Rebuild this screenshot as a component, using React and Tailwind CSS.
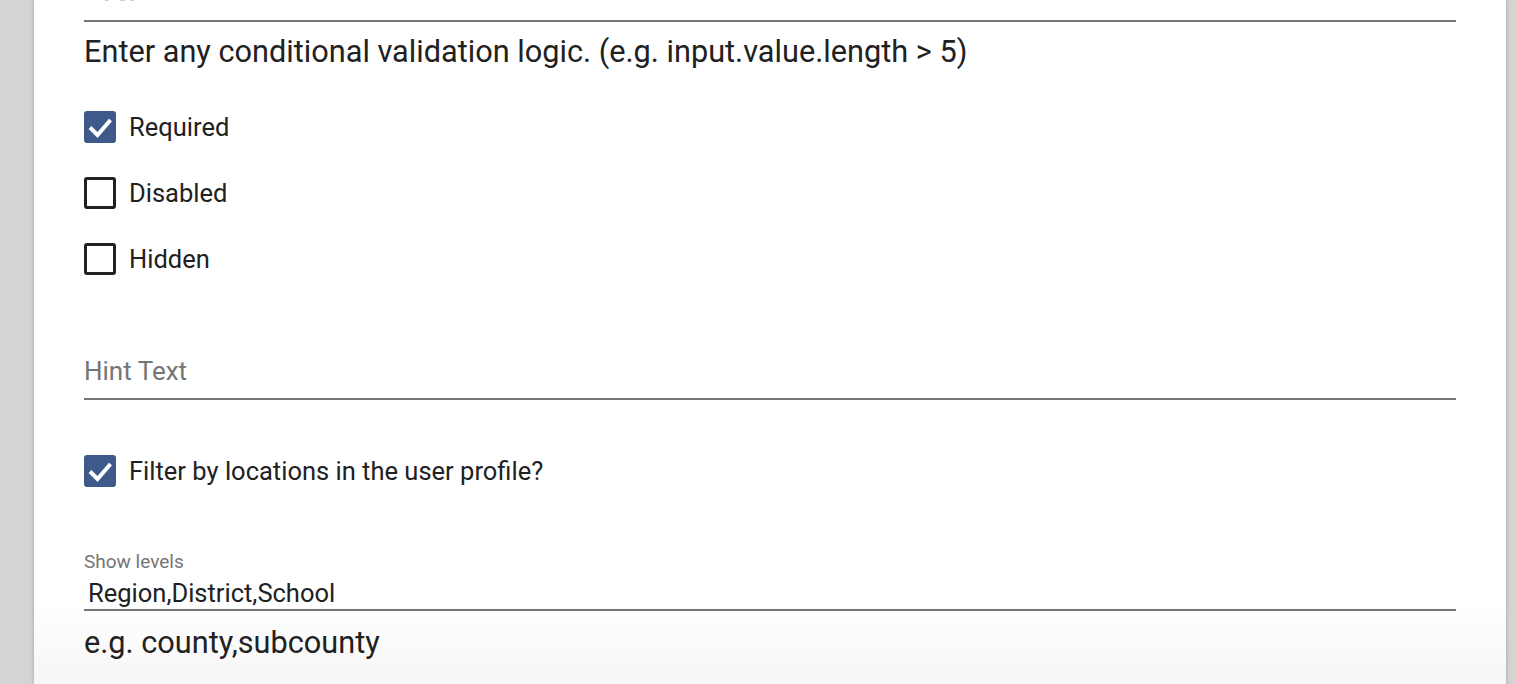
import React from "react";

function Box({ checked }) {
  if (checked) {
    return (
      <div className="w-8 h-8 rounded-[3px] bg-[#3d5a8a] shrink-0">
        <svg width="32" height="32" viewBox="0 0 32 32">
          <path d="M6 16.5 L13.5 24 L26.5 9" fill="none" stroke="#ffffff" strokeWidth="4" strokeLinecap="butt" strokeLinejoin="miter" />
        </svg>
      </div>
    );
  }
  return <div className="w-8 h-8 rounded-[3px] border-[3px] border-[#212121] shrink-0" />;
}

function Check({ checked, label }) {
  return (
    <div className="flex items-center h-8">
      <Box checked={checked} />
      <span className="ml-[13px] text-[25.5px] leading-[28px] text-[#212121]">{label}</span>
    </div>
  );
}

export default function App() {
  return (
    <div className="w-[1516px] h-[684px] bg-[#d4d4d4] overflow-hidden flex" style={{ fontFamily: "Roboto, 'Noto Sans', sans-serif" }}>
      <div className="ml-[34px] w-[1472px] h-full bg-gradient-to-b from-white from-[88%] to-[#f6f6f6] shadow-[0_0_4px_rgba(0,0,0,0.25)] px-[50px] flex flex-col">
        <div className="h-[20px] overflow-hidden relative">
          <div className="absolute left-[20px] top-[-26px] text-[25px] leading-[28px] text-[#c8c8c8]">ygy</div>
        </div>
        <div className="h-[2px] bg-[#757575]" />
        <div className="mt-[15px] text-[30.7px] leading-[30px] text-[#212121]">
          Enter any conditional validation logic. (e.g. input.value.length &gt; 5)
        </div>
        <div className="mt-[44px] flex flex-col gap-[34px]">
          <Check checked label="Required" />
          <Check label="Disabled" />
          <Check label="Hidden" />
        </div>
        <div className="mt-[82px] text-[26px] leading-[28px] text-[#757575] pb-[13px] border-b-2 border-[#757575]">Hint Text</div>
        <div className="mt-[55px]">
          <Check checked label="Filter by locations in the user profile?" />
        </div>
        <div className="mt-[66px] text-[19px] leading-[18px] text-[#757575]">Show levels</div>
        <div className="mt-[8px] pl-[4px] text-[25.5px] leading-[28px] text-[#212121] pb-[2px] border-b-2 border-[#757575]">Region,District,School</div>
        <div className="mt-[17px] text-[30.7px] leading-[30px] text-[#212121]">e.g. county,subcounty</div>
      </div>
    </div>
  );
}
